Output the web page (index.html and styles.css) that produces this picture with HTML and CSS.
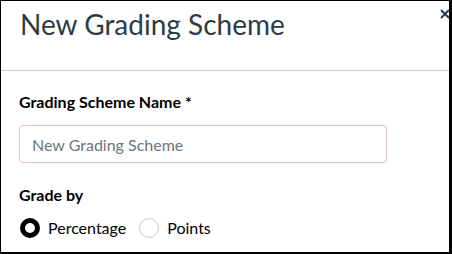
FILE: index.html
```html
<!DOCTYPE html>
<html lang="en">
<head>
<meta charset="utf-8">
<title>New Grading Scheme</title>
<link rel="stylesheet" href="styles.css">
</head>
<body>
<div class="frame">
  <header class="modal-header">
    <h2 class="modal-title">New Grading Scheme</h2>
    <button class="close-btn" aria-label="Close">
      <svg width="10" height="10" viewBox="0 0 10 10"><path d="M1 1 L9 9 M9 1 L1 9" stroke="#2d3b45" stroke-width="2" fill="none"/></svg>
    </button>
  </header>
  <section class="modal-body">
    <label class="field-label" for="name">Grading Scheme Name *</label>
    <input id="name" class="text-input" type="text" placeholder="New Grading Scheme">
    <div class="field-label grade-label">Grade by</div>
    <div class="radio-row">
      <label class="radio"><span class="radio-dot checked"></span><span class="radio-text">Percentage</span></label>
      <label class="radio"><span class="radio-dot"></span><span class="radio-text">Points</span></label>
    </div>
  </section>
</div>
</body>
</html>
```
FILE: styles.css
```css
html, body {
  margin: 0;
  padding: 0;
  background: #ffffff;
}
body {
  font-family: Lato, "Noto Sans", sans-serif;
  color: #2d3b45;
}
.frame {
  position: relative;
  width: 452px;
  height: 254px;
  box-sizing: border-box;
  border-top: 1px solid #000;
  border-left: 1px solid #000;
  border-bottom: 2px solid #000;
  border-right: 3px solid #000;
  overflow: hidden;
  background: #fff;
}
.modal-header {
  height: 62px;
  padding-top: 7px;
  padding-left: 19px;
  border-bottom: 1px solid #c7cdd1;
}
.modal-title {
  margin: 0;
  font-size: 28px;
  font-weight: 400;
  line-height: 1.2;
  color: #2d3b45;
}
.close-btn {
  position: absolute;
  top: 8px;
  left: 439px;
  padding: 0;
  border: 0;
  background: none;
  width: 10px;
  height: 10px;
}
.close-btn svg {
  display: block;
}
.modal-body {
  padding: 19px 0 0 18px;
  display: flex;
  flex-direction: column;
  align-items: flex-start;
}
.field-label {
  font-size: 16px;
  font-weight: 700;
  line-height: 24px;
  color: #000;
  display: block;
}
.text-input {
  margin-top: 11px;
  width: 368px;
  height: 38px;
  box-sizing: border-box;
  border: 1px solid #efc3c3;
  border-radius: 4px;
  box-shadow: 0 0 1px #f6d4d4;
  padding: 0 12px;
  font-family: Lato, "Noto Sans", sans-serif;
  font-size: 16px;
  color: #2d3b45;
  background: #fff;
  outline: none;
}
.text-input::placeholder {
  color: #6b7780;
  opacity: 1;
}
.grade-label {
  margin-top: 20px;
}
.radio-row {
  margin-top: 9px;
  display: flex;
  align-items: center;
  gap: 12px;
}
.radio {
  display: flex;
  align-items: center;
  gap: 8px;
  font-size: 16px;
  line-height: 24px;
  color: #000;
}
.radio-dot {
  width: 20px;
  height: 20px;
  box-sizing: border-box;
  border-radius: 50%;
  border: 1px solid #c7cdd1;
  background: #fff;
  margin-left: 1px;
}
.radio-dot.checked {
  border: 5px solid #000;
}
```
